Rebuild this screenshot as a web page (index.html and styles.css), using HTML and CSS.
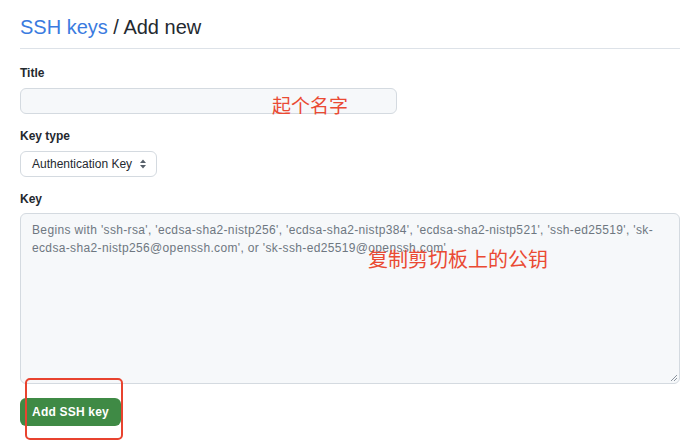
FILE: index.html
```html
<!DOCTYPE html>
<html>
<head>
<meta charset="utf-8">
<link rel="stylesheet" href="styles.css">
</head>
<body>
<div class="page">
  <h2 class="header"><a class="crumb">SSH keys</a> / Add new</h2>
  <div class="form">
    <label class="label">Title</label>
    <div class="input title-input"><span class="note note-title">起个名字</span></div>
    <label class="label gap">Key type</label>
    <div class="select">
      <span>Authentication Key</span>
      <svg class="arrows" width="8" height="12" viewBox="0 0 8 12"><path d="M4 1.5L7 5H1z M4 10.5L1 7h6z" fill="#57606a"/></svg>
    </div>
    <label class="label gap">Key</label>
    <div class="textarea">
      <div class="ph">Begins with 'ssh-rsa', 'ecdsa-sha2-nistp256', 'ecdsa-sha2-nistp384', 'ecdsa-sha2-nistp521', 'ssh-ed25519', 'sk-</div>
      <div class="ph">ecdsa-sha2-nistp256@openssh.com', or 'sk-ssh-ed25519@openssh.com'</div>
      <span class="note note-key">复制剪切板上的公钥</span>
      <svg class="grip" width="9" height="9" viewBox="0 0 9 9"><path d="M8 2L2 8M8 5L5 8" stroke="#8c959f" stroke-width="1"/></svg>
    </div>
    <div class="actions">
      <button class="btn">Add SSH key</button>
      <div class="highlight"></div>
    </div>
  </div>
</div>
</body>
</html>
```

FILE: styles.css
```css
* { box-sizing: border-box; }
html, body { height: 100%; }
body {
  margin: 0;
  min-height: 441px;
  background: #ffffff;
  font-family: "Liberation Sans", Arial, "Noto Sans CJK SC", sans-serif;
  color: #24292f;
}
.page {
  width: 660px;
  margin-left: 20px;
  padding-top: 12px;
}
.header {
  margin: 0;
  font-size: 20px;
  font-weight: 400;
  line-height: 30px;
  padding-bottom: 6px;
  border-bottom: 1px solid #dde2e8;
  color: #24292f;
}
.crumb { color: #3a7be0; }
.form {
  display: flex;
  flex-direction: column;
  align-items: flex-start;
  padding-top: 15px;
  padding-bottom: 16px;
}
.label {
  font-size: 12px;
  font-weight: 700;
  line-height: 18px;
  margin-bottom: 6px;
}
.label.gap { margin-top: 13px; }
.input {
  position: relative;
  width: 377px;
  height: 26px;
  background: #f6f8fa;
  border: 1px solid #d4dae0;
  border-radius: 6px;
}
.note {
  position: absolute;
  color: #ea4a33;
  font-family: "Noto Sans CJK SC", sans-serif;
  white-space: nowrap;
}
.note-title {
  left: 251px;
  top: 3px;
  font-size: 19px;
  line-height: 26px;
}
.select {
  display: flex;
  align-items: center;
  gap: 7px;
  height: 26px;
  padding: 0 9px 0 11px;
  background: #ffffff;
  border: 1px solid #d4dae0;
  border-radius: 6px;
  font-size: 12px;
}
.arrows { display: block; }
.textarea {
  position: relative;
  width: 660px;
  height: 171px;
  margin-top: -1px;
  padding: 7px 11px;
  background: #f6f8fa;
  border: 1px solid #d4dae0;
  border-radius: 6px;
}
.ph {
  font-size: 12px;
  line-height: 18px;
  color: #6e7781;
  white-space: nowrap;
  letter-spacing: 0.35px;
}
.note-key {
  left: 347px;
  top: 32px;
  font-size: 20px;
  line-height: 26px;
}
.grip {
  position: absolute;
  right: 1px;
  bottom: 1px;
}
.actions {
  position: relative;
  margin-top: 14px;
}
.btn {
  display: block;
  width: 101px;
  height: 28px;
  border: 0;
  border-radius: 6px;
  background: #3f8a45;
  color: #ffffff;
  font-family: "Liberation Sans", Arial, sans-serif;
  font-size: 12px;
  font-weight: 700;
  letter-spacing: 0.2px;
  padding: 0;
}
.highlight {
  position: absolute;
  left: 5px;
  top: -20px;
  width: 98px;
  height: 62px;
  border: 2px solid #e8432f;
  border-radius: 5px;
}
```
